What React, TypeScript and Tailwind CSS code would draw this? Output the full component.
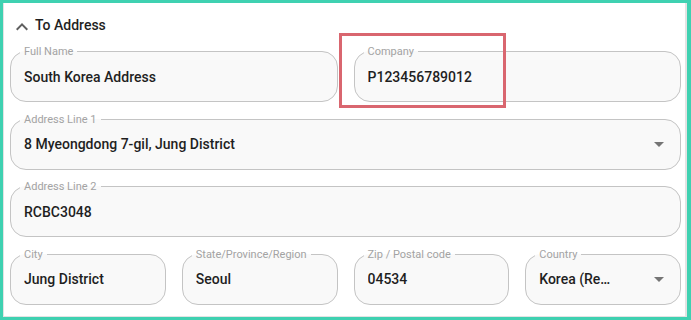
import type { ReactNode } from 'react'

const box = 'h-[57px] min-w-0 rounded-2xl border border-[#c4c4c4] bg-[#f9f9f9] pl-[9px] pr-[9px]'
const legend = 'px-1 text-[11px] leading-[13px] text-[#a3a3a3]'
const value = 'truncate text-sm font-medium text-[#1f1f1f]'

function DropArrow() {
  return (
    <svg viewBox="0 0 24 24" className="h-6 w-6 shrink-0 fill-[#757575]">
      <path d="M7 10l5 5 5-5z" />
    </svg>
  )
}

function Field({ label, children, select }: { label: string; children: ReactNode; select?: boolean }) {
  return (
    <fieldset className={box}>
      <legend className={legend}>{label}</legend>
      <div className="flex h-[37px] items-center pl-1">
        <div className="min-w-0 flex-1">{children}</div>
        {select && <DropArrow />}
      </div>
    </fieldset>
  )
}

export default function App() {
  return (
    <div className="h-[320px] w-[691px] border-t-[3px] border-r-4 border-b-[3px] border-l-[3px] border-[#3fd1b1] font-['Roboto',sans-serif]">
      <div className="relative h-full border-r-2 border-b border-l border-[#e3e3e3] bg-white pt-3 pr-1 pl-[6px]">
        <div className="flex h-6 items-start">
          <svg viewBox="0 0 24 24" className="h-6 w-6 fill-[#5f5f5f]">
            <path d="M12 8l-6 6 1.41 1.41L12 10.83l4.59 4.58L18 14z" />
          </svg>
          <span className="ml-px text-sm leading-5 font-medium text-[#1f1f1f]">To Address</span>
        </div>

        <div className="mt-[6px] grid grid-cols-4 gap-x-4 gap-y-[10.5px]">
          <div className="col-span-2">
            <Field label="Full Name">
              <div className={value}>South Korea Address</div>
            </Field>
          </div>
          <div className="col-span-2">
            <Field label="Company">
              <div className={value}>P123456789012</div>
            </Field>
          </div>
          <div className="col-span-4">
            <Field label="Address Line 1" select>
              <div className={value}>8 Myeongdong 7-gil, Jung District</div>
            </Field>
          </div>
          <div className="col-span-4">
            <Field label="Address Line 2">
              <div className={value}>RCBC3048</div>
            </Field>
          </div>
          <Field label="City">
            <div className={value}>Jung District</div>
          </Field>
          <Field label="State/Province/Region">
            <div className={value}>Seoul</div>
          </Field>
          <Field label="Zip / Postal code">
            <div className={value}>04534</div>
          </Field>
          <Field label="Country" select>
            <div className={`${value} w-[75px]`}>Korea (Republic of)</div>
          </Field>
        </div>

        {/* highlight annotation over the Company field */}
        <div className="pointer-events-none absolute top-[30px] left-[335px] h-[75px] w-[167px] border-[3px] border-[#d9666f]" />
      </div>
    </div>
  )
}
